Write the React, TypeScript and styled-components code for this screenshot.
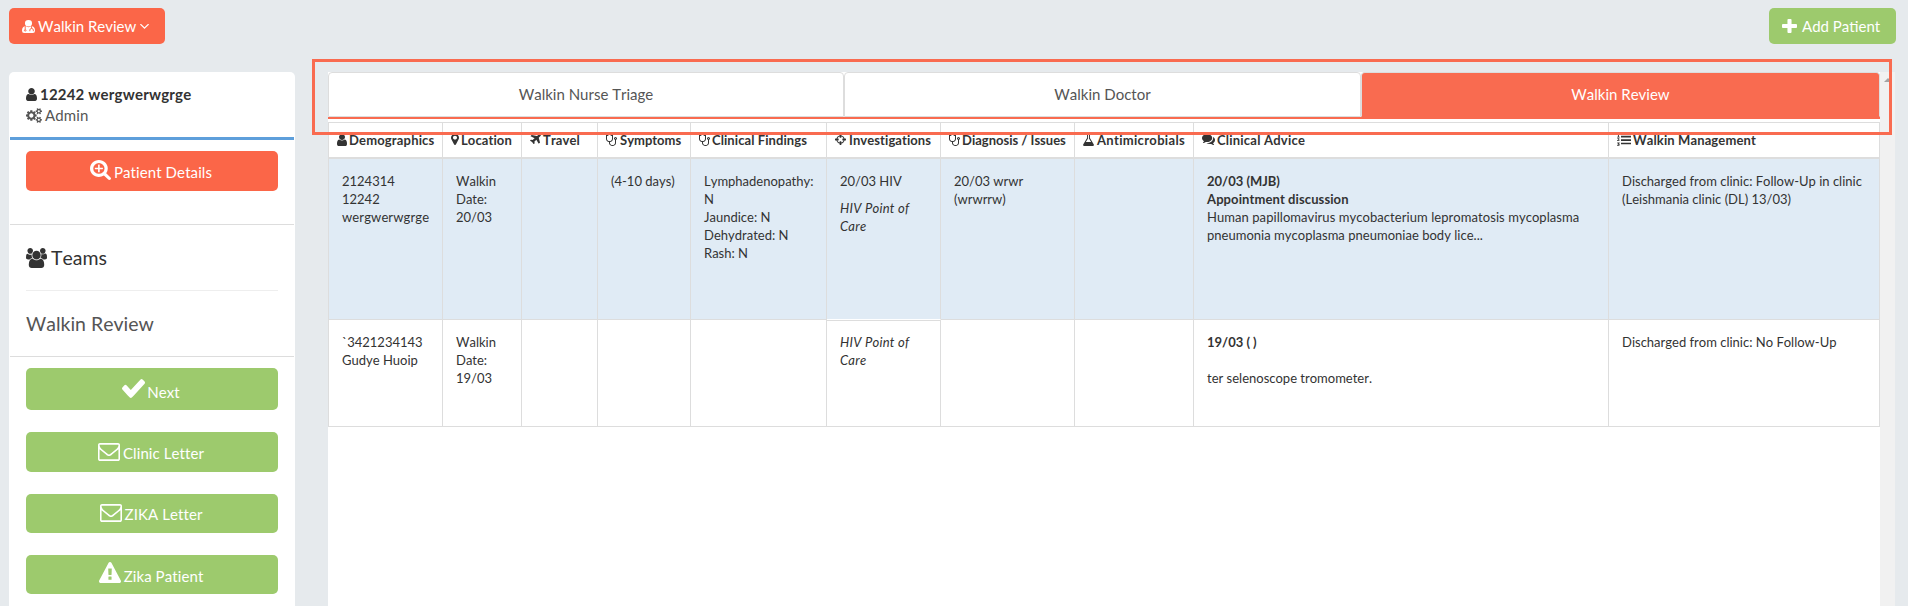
import React from "react";
import styled, { createGlobalStyle } from "styled-components";

const ORANGE = "#f96b50";
const GREEN = "#9dca6d";
const LINE = "#dddddd";

const GlobalStyle = createGlobalStyle`
  * { box-sizing: border-box; }
  body {
    margin: 0;
    background: #e6eaed;
    color: #333;
    font-family: Lato, "Liberation Sans", sans-serif;
    font-size: 15px;
    line-height: 21px;
    font-kerning: none;
  }
`;

type Glyph = { box: [number, number, number, number]; d: string; cut?: string };

const glyphs: Record<string, Glyph> = {
  user: {
    box: [256, 128, 1280, 1536],
    d: "M1536 1399q0 109-62.500 187t-150.500 78h-854q-88 0-150.500-78t-62.500-187q0-85 8.500-160.500t31.500-152 58.500-131 94-89 134.500-34.500q131 128 313 128t313-128q76 0 134.500 34.500t94 89 58.500 131 31.500 152 8.500 160.500zm-256-887q0 159-112.500 271.500t-271.500 112.500-271.500-112.500-112.500-271.500 112.500-271.500 271.500-112.500 271.500 112.500 112.500 271.500z",
  },
  doctor: {
    box: [192, 128, 1408, 1536],
    d: "M1280 512a384 384 0 0 1-768 0a384 384 0 0 1 768 0zM580 850q130 130 316 130t316-130Q1600 900 1600 1400Q1600 1664 1370 1664H422Q192 1664 192 1400Q192 900 580 850z",
    cut: "M540 840V1230M450 1350a90 90 0 1 0 180 0a90 90 0 1 0-180 0M1230 840V1130M1040 1450V1310a190 180 0 0 1 380 0V1450",
  },
  angle: {
    box: [387, 676, 1018, 570],
    d: "M1395 736q0 13-10 23l-466 466q-10 10-23 10t-23-10l-466-466q-10-10-10-23t10-23l50-50q10-10 23-10t23 10l393 393 393-393q10-10 23-10t23 10l50 50q10 10 10 23z",
  },
  plus: {
    box: [192, 128, 1408, 1408],
    d: "M1600 736v192q0 40-28 68t-68 28h-416v416q0 40-28 68t-68 28h-192q-40 0-68-28t-28-68v-416h-416q-40 0-68-28t-28-68v-192q0-40 28-68t68-28h416v-416q0-40 28-68t68-28h192q40 0 68 28t28 68v416h416q40 0 68 28t28 68z",
  },
  cogs: {
    box: [0, 0, 1920, 1792],
    d: "M896 896q0-106-75-181t-181-75-181 75-75 181 75 181 181 75 181-75 75-181zm768 512q0-52-38-90t-90-38-90 38-38 90q0 53 37.500 90.500t90.500 37.500 90.500-37.500 37.500-90.500zm0-1024q0-52-38-90t-90-38-90 38-38 90q0 53 37.500 90.500t90.500 37.500 90.500-37.500 37.500-90.500zm-384 421v185q0 10-7 19.500t-16 10.500l-155 24q-11 35-32 76 34 48 90 115 7 11 7 20 0 12-7 19-23 30-82.500 89.500t-78.500 59.500q-11 0-21-7l-115-90q-37 19-77 31-11 108-23 155-7 24-30 24h-186q-11 0-20-7.500t-10-17.500l-23-153q-34-10-75-31l-118 89q-7 7-20 7-11 0-21-8-144-133-144-160 0-9 7-19 10-14 41-53t47-61q-23-44-35-82l-152-24q-10-1-17-9.500t-7-19.500v-185q0-10 7-19.500t16-10.500l155-24q11-35 32-76-34-48-90-115-7-11-7-20 0-12 7-20 22-30 82-89t79-59q11 0 21 7l115 90q34-18 77-32 11-108 23-154 7-24 30-24h186q11 0 20 7.500t10 17.500l23 153q34 10 75 31l118-89q8-7 20-7 11 0 21 8 144 133 144 160 0 8-7 19-12 16-42 54t-45 60q23 48 34 82l152 23q10 2 17 10.500t7 19.500zm640 533v140q0 16-149 31-12 27-30 52 51 113 51 138 0 4-4 7-122 71-124 71-8 0-46-47t-52-68q-20 2-30 2t-30-2q-14 21-52 68t-46 47q-2 0-124-71-4-3-4-7 0-25 51-138-18-25-30-52-149-15-149-31v-140q0-16 149-31 13-29 30-52-51-113-51-138 0-4 4-7 4-2 35-20t59-34 30-16q8 0 46 46.500t52 67.500q20-2 30-2t30 2q51-71 92-112l6-2q4 0 124 70 4 3 4 7 0 25-51 138 17 23 30 52 149 15 149 31zm0-1024v140q0 16-149 31-12 27-30 52 51 113 51 138 0 4-4 7-122 71-124 71-8 0-46-47t-52-68q-20 2-30 2t-30-2q-14 21-52 68t-46 47q-2 0-124-71-4-3-4-7 0-25 51-138-18-25-30-52-149-15-149-31v-140q0-16 149-31 13-29 30-52-51-113-51-138 0-4 4-7 4-2 35-20t59-34 30-16q8 0 46 46.500t52 67.500q20-2 30-2t30 2q51-71 92-112l6-2q4 0 124 70 4 3 4 7 0 25-51 138 17 23 30 52 149 15 149 31z",
  },
  zoomPlus: {
    box: [64, 128, 1664, 1664],
    d: "M1088 800v64q0 13-9.500 22.500t-22.500 9.500h-224v224q0 13-9.500 22.500t-22.500 9.500h-64q-13 0-22.500-9.500t-9.500-22.500v-224h-224q-13 0-22.500-9.500t-9.500-22.500v-64q0-13 9.500-22.500t22.500-9.500h224v-224q0-13 9.500-22.500t22.500-9.500h64q13 0 22.500 9.500t9.500 22.500v224h224q13 0 22.500 9.500t9.500 22.500zm128 32q0-185-131.500-316.500t-316.500-131.500-316.500 131.500-131.500 316.500 131.500 316.500 316.500 131.500 316.500-131.500 131.500-316.500zm512 832q0 53-37.500 90.500t-90.500 37.500q-54 0-90-38l-343-342q-179 124-399 124-143 0-273.500-55.500t-225-150-150-225-55.500-273.500 55.500-273.500 150-225 225-150 273.500-55.500 273.500 55.500 225 150 150 225 55.500 273.500q0 220-124 399l343 343q37 37 37 90z",
  },
  users: {
    box: [0, 0, 1920, 1792],
    d: "M593 896q-162 5-265 128h-134q-82 0-138-40.500t-56-118.500q0-353 124-353 6 0 43.500 21t97.500 42.500 119 21.500q67 0 133-23-5 37-5 66 0 159 81 286zm1071 637q0 120-73 189.500t-194 69.500h-874q-121 0-194-69.500t-73-189.500q0-53 3.500-103.500t14-109 26.500-108.500 43-97.500 62-81 85.500-53.500 111.500-20q10 0 43 21.500t73 48 107 48 135 21.500 135-21.500 107-48 73-48 43-21.500q61 0 111.500 20t85.500 53.500 62 81 43 97.500 26.500 108.500 14 109 3.500 103.500zm-1024-1277q0 106-75 181t-181 75-181-75-75-181 75-181 181-75 181 75 75 181zm704 384q0 159-112.500 271.500t-271.500 112.500-271.500-112.500-112.500-271.500 112.500-271.500 271.500-112.500 271.500 112.500 112.500 271.500zm576 225q0 78-56 118.500t-138 40.500h-134q-103-123-265-128 81-127 81-286 0-29-5-66 66 23 133 23 59 0 119-21.500t97.500-42.500 43.500-21q124 0 124 353zm-128-609q0 106-75 181t-181 75-181-75-75-181 75-181 181-75 181 75 75 181z",
  },
  check: {
    box: [121, 334, 1550, 1188],
    d: "M1671 566q0 40-28 68l-724 724-136 136q-28 28-68 28t-68-28l-136-136-362-362q-28-28-28-68t28-68l136-136q28-28 68-28t68 28l294 295 656-657q28-28 68-28t68 28l136 136q28 28 28 68z",
  },
  envelope: {
    box: [0, 256, 1792, 1408],
    d: "M1664 1504v-768q-32 36-69 66-268 206-426 338-51 43-83 67t-86.500 48.500-102.500 24.500h-2q-48 0-102.500-24.500t-86.500-48.500-83-67q-158-132-426-338-37-30-69-66v768q0 13 9.500 22.500t22.500 9.500h1472q13 0 22.500-9.500t9.500-22.500zm0-1051v-24.500l-.5-13-3-12.500-5.500-9-9-7.500-14-2.500h-1472q-13 0-22.500 9.500t-9.500 22.500q0 168 147 284 193 152 401 317 6 5 35 29.500t46 37.500 44.500 31.500 50.500 27.500 43 9h2q20 0 43-9t50.500-27.500 44.500-31.500 46-37.500 35-29.500q208-165 401-317 54-43 100.500-115.500t46.500-131.500zm128-37v1088q0 66-47 113t-113 47h-1472q-66 0-113-47t-47-113v-1088q0-66 47-113t113-47h1472q66 0 113 47t47 113z",
  },
  warning: {
    box: [0, 0, 1792, 1664],
    d: "M1024 1375v-190q0-14-9.500-23.500t-22.500-9.500h-192q-13 0-22.500 9.500t-9.500 23.500v190q0 14 9.500 23.500t22.500 9.500h192q13 0 22.500-9.500t9.500-23.500zm-2-374l18-459q0-12-10-19-13-11-24-11h-220q-11 0-24 11-10 7-10 21l17 457q0 10 10 16.500t24 6.500h185q14 0 23.500-6.500t10.500-16.500zm-14-934l768 1408q35 63-2 126-17 29-46.500 46t-63.500 17h-1536q-34 0-63.500-17t-46.500-46q-37-63-2-126l768-1408q17-31 47-49t65-18 65 18 47 49z",
  },
  marker: {
    box: [384, 128, 1024, 1536],
    d: "M1152 640q0-106-75-181t-181-75-181 75-75 181 75 181 181 75 181-75 75-181zm256 0q0 109-33 179l-364 774q-16 33-47.500 52t-67.500 19-67.500-19-46.500-52l-365-774q-33-70-33-179 0-212 150-362t362-150 362 150 150 362z",
  },
  plane: {
    box: [192, 128, 1408, 1408],
    d: "M1568 160q44 52 12 148t-108 172l-161 161 160 696q5 19-12 33l-128 96q-7 6-19 6-4 0-7-1-15-3-21-16l-279-508-259 259 53 194q5 17-8 31l-96 96q-9 9-23 9h-2q-15-2-24-13l-189-252-252-189q-11-7-13-23-1-13 9-25l96-97q9-9 23-9 6 0 8 1l194 53 259-259-508-279q-14-8-17-24-2-16 9-27l128-128q14-13 30-8l665 159 160-160q76-76 172-108t148 12z",
  },
  stethoscope: {
    box: [192, 128, 1408, 1536],
    d: "M1472 704q0-26-19-45t-45-19-45 19-19 45 19 45 45 19 45-19 19-45zm128 0q0 62-35.500 111t-92.500 70v395q0 159-131.500 271.500t-316.500 112.500-316.500-112.500-131.500-271.500v-132q-164-20-274-128t-110-252v-512q0-26 19-45t45-19q6 0 16 2 17-30 47-48t65-18q53 0 90.500 37.500t37.500 90.500-37.500 90.500-90.500 37.500q-33 0-64-18v402q0 106 94 181t226 75 226-75 94-181v-402q-31 18-64 18-53 0-90.500-37.500t-37.500-90.500 37.500-90.500 90.500-37.500q35 0 65 18t47 48q10-2 16-2 26 0 45 19t19 45v512q0 144-110 252t-274 128v132q0 106 94 181t226 75 226-75 94-181v-395q-57-21-92.500-70t-35.500-111q0-80 56-136t136-56 136 56 56 136z",
  },
  crosshairs: {
    box: [128, 128, 1536, 1536],
    d: "M1325 1024h-109q-26 0-45-19t-19-45v-128q0-26 19-45t45-19h109q-32-108-112.500-188.500t-188.500-112.500v109q0 26-19 45t-45 19h-128q-26 0-45-19t-19-45v-109q-108 32-188.500 112.500t-112.500 188.500h109q26 0 45 19t19 45v128q0 26-19 45t-45 19h-109q32 108 112.500 188.500t188.500 112.500v-109q0-26 19-45t45-19h128q26 0 45 19t19 45v109q108-32 188.500-112.500t112.500-188.500zm339-192v128q0 26-19 45t-45 19h-143q-37 161-154.500 278.500t-278.500 154.500v143q0 26-19 45t-45 19h-128q-26 0-45-19t-19-45v-143q-161-37-278.500-154.500t-154.500-278.500h-143q-26 0-45-19t-19-45v-128q0-26 19-45t45-19h143q37-161 154.500-278.500t278.500-154.500v-143q0-26 19-45t45-19h128q26 0 45 19t19 45v143q161 37 278.500 154.500t154.500 278.500h143q26 0 45 19t19 45z",
  },
  flask: {
    box: [158, 128, 1476, 1536],
    d: "M1591 1448q56 89 21.500 152.500t-140.500 63.500h-1152q-106 0-140.500-63.500t21.500-152.500l503-793v-399h-64q-26 0-45-19t-19-45 19-45 45-19h512q26 0 45 19t19 45-19 45-45 19h-64v399zm-779-725l-272 429h712l-272-429-20-31v-436h-128v436z",
  },
  comments: {
    box: [0, 256, 1792, 1408],
    d: "M1408 768q0 139-94 257t-256.500 186.500-353.500 68.500q-86 0-176-16-124 88-278 128-36 9-86 16h-3q-11 0-20.500-8t-11.500-21q-1-3-1-6.500t.5-6.500 2-6l2.500-5 3.500-5.500 4-5 4.500-5 4-4.500q5-6 23-25t26-29.500 22.500-29 25-38.500 20.500-44q-124-72-195-177t-71-224q0-139 94-257t256.500-186.500 353.500-68.500 353.500 68.500 256.500 186.500 94 257zm384 256q0 120-71 224.500t-195 176.500q10 24 20.500 44t25 38.500 22.500 29 26 29.500 23 25q1 1 4 4.500t4.500 5 4 5 3.500 5.500l2.500 5 2 6 .5 6.500-1 6.500q-3 14-13 22t-22 7q-50-7-86-16-154-40-278-128-90 16-176 16-271 0-472-132 58 4 88 4 161 0 309-45t264-129q125-92 192-212t67-254q0-77-23-152 129 71 204 178t75 230z",
  },
  list: {
    box: [0, 64, 1792, 1664],
    d: "M512 320h1280v220H512zM512 800h1280v220H512zM512 1280h1280v220H512zM120 64h120v380h110v90H20v-90h100V190H40zM20 680q150-90 280 0q60 130-130 270h180v100H20v-110q190-150 190-200q-60-50-150 20zM30 1230h310v110l-100 90q120 40 110 150q-60 170-340 110v-100q180 40 210-20q0-70-150-60v-80l100-100H30z",
  },
};

const Svg = styled.svg<{ $down: number; $gap: number }>`
  display: inline-block;
  flex: none;
  fill: currentColor;
  position: relative;
  top: ${(p) => p.$down}px;
  margin-right: ${(p) => p.$gap}px;
`;

const Icon = ({ name, w, h, down = 0, gap = 4 }: { name: string; w: number; h: number; down?: number; gap?: number }) => (
  <Svg $down={down} $gap={gap} width={w} height={h} viewBox={glyphs[name].box.join(" ")} preserveAspectRatio="none" aria-hidden>
    <path d={glyphs[name].d} />
    {glyphs[name].cut && <path d={glyphs[name].cut} fill="none" stroke="#fb6648" strokeWidth={105} />}
  </Svg>
);

const Page = styled.div`
  position: relative;
  height: 606px;
  overflow: hidden;
  padding: 8px 12px 0 9px;
`;

const TopBar = styled.header`
  display: flex;
  justify-content: space-between;
  height: 64px;
`;

const TopButton = styled.button<{ $color: string; $width: number }>`
  display: flex;
  align-items: center;
  width: ${(p) => p.$width}px;
  height: 36px;
  padding: 0 0 0 13px;
  border: 0;
  border-radius: 5px;
  background: ${(p) => p.$color};
  color: #fff;
  font: inherit;
  font-kerning: none;
  white-space: nowrap;
`;

const ButtonText = styled.span`
  margin-right: 4px;
`;

const Body = styled.main`
  display: flex;
  height: 534px;
`;

const Sidebar = styled.aside`
  width: 286px;
  margin-right: 33px;
  padding: 0 1px;
  border-radius: 5px 5px 0 0;
  background: #fff;
`;

const Section = styled.section<{ $height: number; $top: number; $line?: string }>`
  height: ${(p) => p.$height}px;
  padding: ${(p) => p.$top}px 16px 0;
  border-bottom: ${(p) => p.$line ?? `1px solid ${LINE}`};
`;

const Identity = styled.div<{ $strong?: boolean }>`
  display: flex;
  align-items: center;
  height: 21px;
  color: ${(p) => (p.$strong ? "#333" : "#555")};
  font-weight: ${(p) => (p.$strong ? 700 : 400)};
  letter-spacing: ${(p) => (p.$strong ? 0.2 : 0.1)}px;
`;

const Heading = styled.h4<{ $line?: boolean; $color: string }>`
  display: flex;
  align-items: center;
  height: ${(p) => (p.$line ? 66 : 64)}px;
  margin: 0;
  border-bottom: ${(p) => (p.$line ? "1px solid #eee" : "0")};
  color: ${(p) => p.$color};
  font-size: 19.5px;
  font-weight: 400;
`;

const Action = styled.button<{ $color: string; $height?: number; $top?: number }>`
  display: flex;
  align-items: center;
  justify-content: center;
  width: 100%;
  height: ${(p) => p.$height ?? 40}px;
  margin-bottom: 22px;
  padding: ${(p) => p.$top ?? 3}px 2px 0 0;
  border: 0;
  border-radius: 5px;
  background: ${(p) => p.$color};
  color: #fff;
  font: inherit;
  font-kerning: none;
  letter-spacing: 0.09px;
`;

const Content = styled.div`
  width: 1552px;
  background: #fff;
`;

const Tabs = styled.nav`
  display: grid;
  grid-template-columns: 516px 517px 519px;
  height: 47px;
  margin-bottom: 3px;
  border-bottom: 2px solid ${ORANGE};
`;

const Tab = styled.div<{ $active?: boolean }>`
  display: flex;
  align-items: center;
  justify-content: center;
  border: 1px solid ${LINE};
  border-bottom-color: ${(p) => (p.$active ? ORANGE : LINE)};
  border-radius: 4px 4px 0 0;
  background: ${(p) => (p.$active ? ORANGE : "#fff")};
  color: ${(p) => (p.$active ? "#fff" : "#555")};
`;

const Row = styled.div<{ $height: number; $tint?: boolean }>`
  display: grid;
  grid-template-columns: 114px 79px 76px 93px 136px 114px 134px 119px 415px 271px;
  width: 1552px;
  height: ${(p) => p.$height}px;
  border-left: 1px solid ${LINE};
  background: ${(p) => (p.$tint ? "#e0ebf5" : "#fff")};
  font-size: 13px;
  line-height: 18px;
`;

const HeadRow = styled(Row)`
  border-top: 1px solid ${LINE};
`;

const HeadCell = styled.div<{ $track: number }>`
  display: flex;
  align-items: center;
  padding: 0 0 1px 8px;
  border-right: 1px solid ${LINE};
  border-bottom: 2px solid ${LINE};
  font-weight: 700;
  letter-spacing: ${(p) => p.$track}px;
  white-space: nowrap;
`;

const Cell = styled.div<{ $below?: string; $above?: boolean }>`
  padding: ${(p) => (p.$above ? 12 : 13)}px 8px 0 13px;
  border-right: 1px solid ${LINE};
  border-bottom: 1px solid ${(p) => p.$below ?? LINE};
  border-top: ${(p) => (p.$above ? `1px solid ${LINE}` : "0")};
`;

const Line = styled.div<{ $bold?: boolean; $italic?: boolean; $top?: number; $track?: number }>`
  min-height: 18px;
  margin-top: ${(p) => p.$top ?? 0}px;
  font-weight: ${(p) => (p.$bold ? 700 : 400)};
  font-style: ${(p) => (p.$italic ? "italic" : "normal")};
  letter-spacing: ${(p) => p.$track ?? (p.$italic ? 0.25 : p.$bold ? 0.1 : 0)}px;
  white-space: nowrap;
`;

const Scrollbar = styled.div`
  width: 15px;
  padding: 6px 0 0 4px;
  background: #f1f1f1;
`;

const ScrollArrow = styled.div`
  width: 0;
  border: 4px solid transparent;
  border-top: 0;
  border-bottom-color: #a3a3a3;
`;

const Highlight = styled.div`
  position: absolute;
  left: 312px;
  top: 59px;
  width: 1580px;
  height: 76px;
  border: 3px solid ${ORANGE};
`;

const columns: { icon: string; w: number; h: number; gap: number; track: number; down?: number; label: string }[] = [
  { icon: "user", w: 10, h: 12, gap: 2, track: 0.16, label: "Demographics" },
  { icon: "marker", w: 8, h: 11, gap: 2, track: 0.1, label: "Location" },
  { icon: "plane", w: 11, h: 10, gap: 2, track: 0.1, down: -1, label: "Travel" },
  { icon: "stethoscope", w: 11, h: 12, gap: 3, track: 0, label: "Symptoms" },
  { icon: "stethoscope", w: 11, h: 12, gap: 2, track: 0.08, label: "Clinical Findings" },
  { icon: "crosshairs", w: 11, h: 11, gap: 3, track: 0.08, label: "Investigations" },
  { icon: "stethoscope", w: 11, h: 12, gap: 2, track: 0, label: "Diagnosis / Issues" },
  { icon: "flask", w: 11, h: 12, gap: 3, track: 0.32, label: "Antimicrobials" },
  { icon: "comments", w: 13, h: 11, gap: 2, track: 0.22, label: "Clinical Advice" },
  { icon: "list", w: 14, h: 12, gap: 2, track: 0.12, label: "Walkin Management" },
];

export default function App() {
  return (
    <Page>
      <GlobalStyle />
      <TopBar>
        <TopButton $color="#fb6648" $width={156}>
          <Icon name="doctor" w={13} h={13} gap={3} />
          <ButtonText>Walkin Review</ButtonText>
          <Icon name="angle" w={9} h={5} gap={0} />
        </TopButton>
        <TopButton $color={GREEN} $width={127}>
          <Icon name="plus" w={15} h={14} gap={5} />
          Add Patient
        </TopButton>
      </TopBar>
      <Body>
        <Sidebar>
          <Section $height={68} $top={12} $line="3px solid #5e9fdb">
            <Identity $strong><Icon name="user" w={11} h={13} gap={3} />12242 wergwerwgrge</Identity>
            <Identity><Icon name="cogs" w={16} h={15} gap={3} />Admin</Identity>
          </Section>
          <Section $height={85} $top={11}>
            <Action $color="#fb6648"><Icon name="zoomPlus" w={21} h={20} down={-3} gap={3} />Patient Details</Action>
          </Section>
          <Section $height={132} $top={0}>
            <Heading $line $color="#333"><Icon name="users" w={21} h={20} gap={4} />Teams</Heading>
            <Heading $color="#555">Walkin Review</Heading>
          </Section>
          <Section $height={249} $top={11} $line="0">
            <Action $color={GREEN} $height={42} $top={6}><Icon name="check" w={23} h={19} down={-4} gap={2} />Next</Action>
            <Action $color={GREEN}><Icon name="envelope" w={22} h={18} down={-2} gap={3} />Clinic Letter</Action>
            <Action $color={GREEN} $height={39} $top={2}><Icon name="envelope" w={22} h={18} down={-2} gap={3} />ZIKA Letter</Action>
            <Action $color={GREEN} $height={39}><Icon name="warning" w={22} h={21} down={-4} gap={3} />Zika Patient</Action>
          </Section>
        </Sidebar>
        <Content>
          <Tabs>
            <Tab>Walkin Nurse Triage</Tab>
            <Tab>Walkin Doctor</Tab>
            <Tab $active>Walkin Review</Tab>
          </Tabs>
          <HeadRow $height={37}>
            {columns.map((c) => (
              <HeadCell key={c.label} $track={c.track}>
                <Icon name={c.icon} w={c.w} h={c.h} gap={c.gap} down={c.down} />
                {c.label}
              </HeadCell>
            ))}
          </HeadRow>
          <Row $height={161} $tint>
            <Cell><Line>2124314</Line><Line>12242</Line><Line $track={0.12}>wergwerwgrge</Line></Cell>
            <Cell><Line>Walkin</Line><Line>Date:</Line><Line>20/03</Line></Cell>
            <Cell />
            <Cell><Line>(4-10 days)</Line></Cell>
            <Cell><Line>Lymphadenopathy:</Line><Line>N</Line><Line>Jaundice: N</Line><Line>Dehydrated: N</Line><Line>Rash: N</Line></Cell>
            <Cell $below="#fff"><Line>20/03 HIV</Line><Line $italic $top={9}>HIV Point of</Line><Line $italic>Care</Line></Cell>
            <Cell><Line>20/03 wrwr</Line><Line>(wrwrrw)</Line></Cell>
            <Cell />
            <Cell>
              <Line $bold $track={0}>20/03 (MJB)</Line>
              <Line $bold>Appointment discussion</Line>
              <Line $track={0.06}>Human papillomavirus mycobacterium lepromatosis mycoplasma</Line>
              <Line $track={0.02}>pneumonia mycoplasma pneumoniae body lice...</Line>
            </Cell>
            <Cell><Line>Discharged from clinic: Follow-Up in clinic</Line><Line>(Leishmania clinic (DL) 13/03)</Line></Cell>
          </Row>
          <Row $height={107}>
            <Cell><Line>`3421234143</Line><Line>Gudye Huoip</Line></Cell>
            <Cell><Line>Walkin</Line><Line>Date:</Line><Line>19/03</Line></Cell>
            <Cell />
            <Cell />
            <Cell />
            <Cell $above><Line $italic>HIV Point of</Line><Line $italic>Care</Line></Cell>
            <Cell />
            <Cell />
            <Cell><Line $bold $track={0}>19/03 ( )</Line><Line /><Line>ter selenoscope tromometer.</Line></Cell>
            <Cell><Line>Discharged from clinic: No Follow-Up</Line></Cell>
          </Row>
        </Content>
        <Scrollbar><ScrollArrow /></Scrollbar>
      </Body>
      <Highlight />
    </Page>
  );
}
